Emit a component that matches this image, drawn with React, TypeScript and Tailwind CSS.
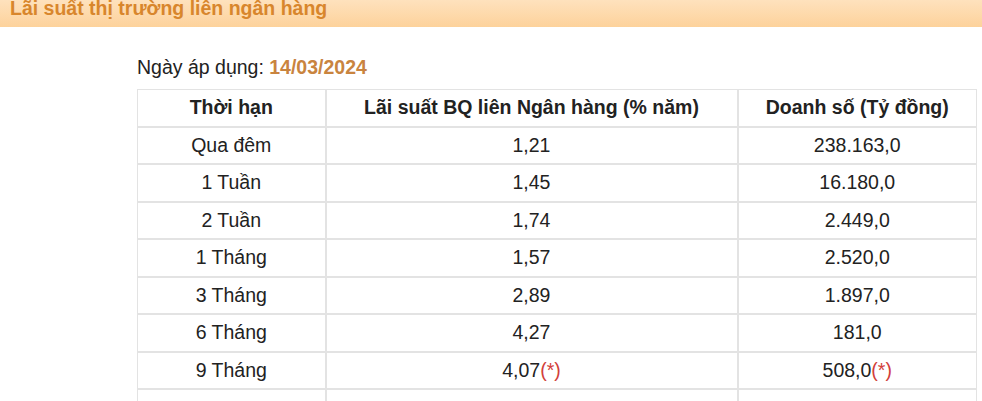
const rows = [
  { term: 'Qua đêm', rate: '1,21', volume: '238.163,0' },
  { term: '1 Tuần', rate: '1,45', volume: '16.180,0' },
  { term: '2 Tuần', rate: '1,74', volume: '2.449,0' },
  { term: '1 Tháng', rate: '1,57', volume: '2.520,0' },
  { term: '3 Tháng', rate: '2,89', volume: '1.897,0' },
  { term: '6 Tháng', rate: '4,27', volume: '181,0' },
  { term: '9 Tháng', rate: '4,07', volume: '508,0', note: true },
];

function Star() {
  return <span className="text-[#d2403a]">(*)</span>;
}

export default function App() {
  return (
    <div className="h-[401px] w-[982px] overflow-hidden bg-white font-['Liberation_Sans',Arial,sans-serif] text-[19.5px] text-[#222]">
      {/* Title bar */}
      <div className="h-[28px] bg-gradient-to-b from-[#fee2be] to-[#fdd29b] pl-[10px]">
        <h2 className="-mt-[1px] text-[19.5px] font-bold leading-[19px] text-[#d8862c]">
          Lãi suất thị trường liên ngân hàng
        </h2>
      </div>

      <div className="pl-[137px] pt-[28px]">
        <p className="mb-[10px] leading-[24px]">
          Ngày áp dụng: <span className="font-bold text-[#c9843f]">14/03/2024</span>
        </p>

        <table className="w-[839px] table-fixed border-collapse text-center">
          <colgroup>
            <col className="w-[188px]" />
            <col className="w-[412px]" />
            <col className="w-[239px]" />
          </colgroup>
          <thead>
            <tr className="h-[37px]">
              <th className="border-2 border-t border-l border-[#e3e3e3] font-bold">Thời hạn</th>
              <th className="border-2 border-t border-[#e3e3e3] font-bold">Lãi suất BQ liên Ngân hàng (% năm)</th>
              <th className="border-2 border-t border-r border-[#e3e3e3] font-bold">Doanh số (Tỷ đồng)</th>
            </tr>
          </thead>
          <tbody>
            {rows.map((r) => (
              <tr key={r.term} className="h-[37.5px]">
                <td className="border-2 border-l border-[#e3e3e3]">{r.term}</td>
                <td className="border-2 border-[#e3e3e3]">
                  {r.rate}
                  {r.note && <Star />}
                </td>
                <td className="border-2 border-r border-[#e3e3e3]">
                  {r.volume}
                  {r.note && <Star />}
                </td>
              </tr>
            ))}
            <tr className="h-[37.5px]">
              <td className="border-2 border-l border-[#e3e3e3]">&nbsp;</td>
              <td className="border-2 border-[#e3e3e3]">&nbsp;</td>
              <td className="border-2 border-r border-[#e3e3e3]">&nbsp;</td>
            </tr>
          </tbody>
        </table>
      </div>
    </div>
  );
}
